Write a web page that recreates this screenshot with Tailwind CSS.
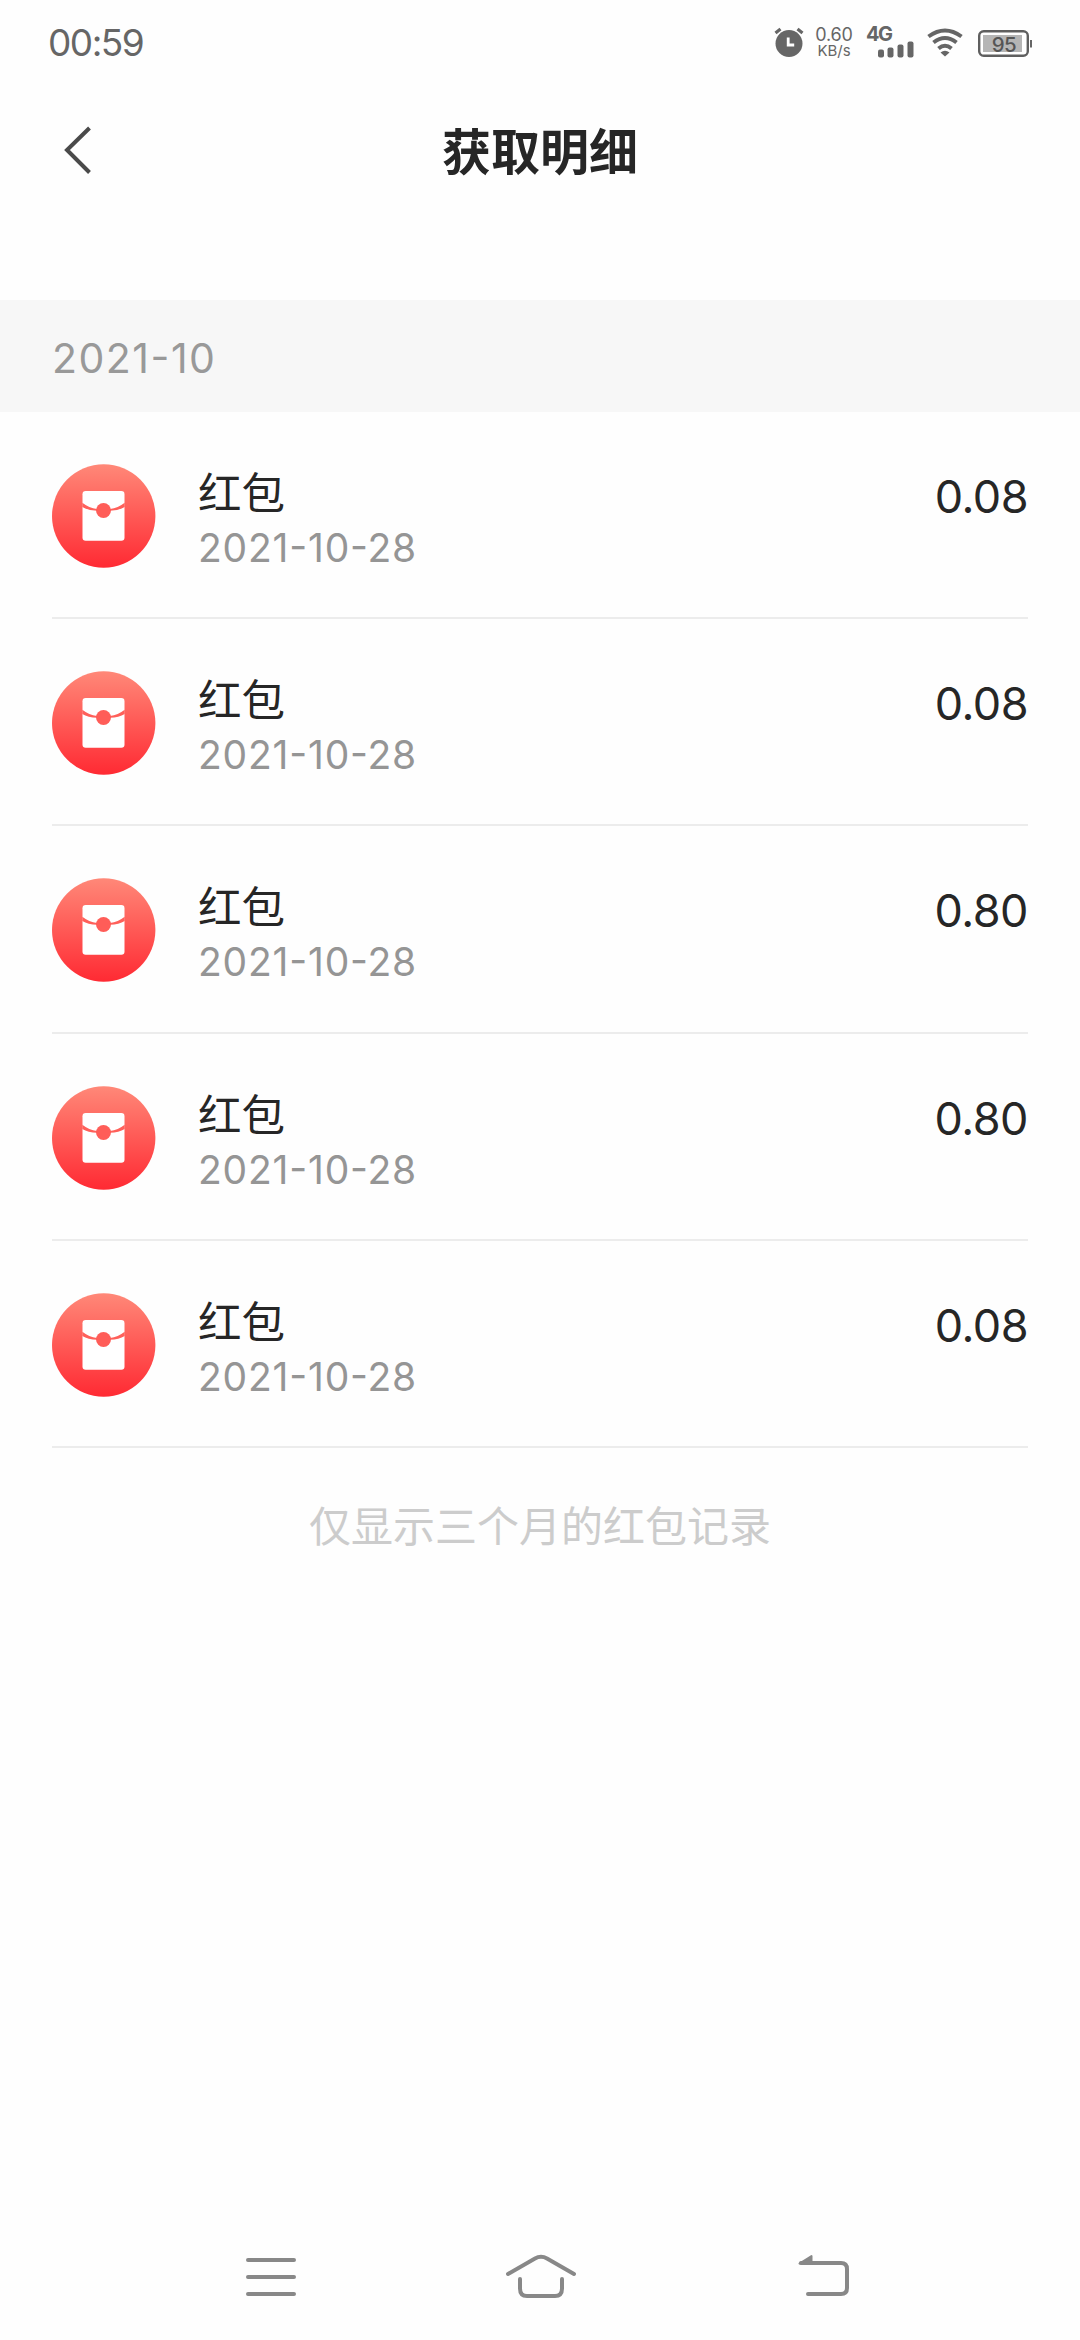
<!DOCTYPE html>
<html lang="zh-CN">
<head>
<meta charset="utf-8">
<title>获取明细</title>
<script src="https://cdn.jsdelivr.net/npm/@tailwindcss/browser@4"></script>
</head>
<body class="bg-[#fefefe]">
<div class="flex h-[2340px] w-[1080px] flex-col overflow-hidden bg-[#fefefe] font-['Inter','Noto_Sans_CJK_SC',sans-serif] text-[#262626]">

  <div class="flex h-[84px] items-center pl-[48px] pr-[48px] text-[#666]">
    <span class="text-[37px] leading-none tracking-[-1.5px]">00:59</span>
    <div class="ml-auto flex h-full items-center">
      <svg class="mr-[11px] h-[30px] w-[30px]" viewBox="0 0 30 30" fill="none">
        <circle cx="15" cy="16.500" r="13.500" fill="#666"/>
        <path d="M1.500 6L6.500 2M28.500 6L23.500 2" stroke="#666" stroke-width="3.200"/>
        <path d="M14.200 10.500V18h6" stroke="#fff" stroke-width="2.800"/>
      </svg>
      <div class="mr-[13px] flex w-[38px] flex-col items-center leading-none">
        <span class="text-[18px] leading-[17px] tracking-[-0.2px]">0.60</span>
        <span class="text-[15px] leading-[15px]">KB/s</span>
      </div>
      <div class="mr-[13px] flex h-[30px] w-[48px] flex-col">
        <span class="text-[20px] font-bold leading-[15px] tracking-[-1.5px]">4G</span>
        <svg class="mt-[-1px] ml-[12px] h-[17px] w-[36px] shrink-0" viewBox="0 0 36 17" fill="#666">
          <rect x="0" y="8.500" width="6" height="8" rx="2"/><rect x="9.500" y="6.500" width="6" height="10" rx="2"/><rect x="19.500" y="3.500" width="6" height="13" rx="2"/><rect x="29.500" y="0.500" width="6" height="16" rx="2"/>
        </svg>
      </div>
      <svg class="mr-[15px] h-[30px] w-[36px]" viewBox="0 0 36 30" fill="none" stroke="#666" stroke-width="4">
        <path d="M1.500 9.500Q18-2.500 34.500 9.500M6.500 15.500Q18 6.500 29.500 15.500M11.500 21.500Q18 16 24.500 21.500"/>
        <path d="M13.500 25.500Q18 22 22.500 25.500L18 29.500z" fill="#666" stroke="none"/>
      </svg>
      <svg class="mt-[3px] h-[28px] w-[54px]" viewBox="0 0 54 28">
        <rect x="1.200" y="1.200" width="48.600" height="24.600" rx="4.500" fill="#fff" stroke="#5f5f5f" stroke-width="2.400"/>
        <rect x="5" y="5" width="39" height="17" fill="#b5b5b5"/>
        <rect x="52" y="10" width="2" height="7.500" fill="#666"/>
        <text x="26" y="21.500" text-anchor="middle" font-family="Inter" font-size="20.500" font-weight="500" fill="#555" letter-spacing="-0.500">95</text>
      </svg>
    </div>
  </div>

  <div class="grid h-[216px] grid-cols-3 items-start pt-[42px]">
    <svg class="ml-[62px] h-[50px] w-[32px]" viewBox="0 0 32 50" fill="none" stroke="#4a4a4a" stroke-width="4"><path d="M27.500 2L5 24L27.500 46.500"/></svg>
    <h1 class="pt-[2px] text-center text-[49px] font-bold leading-[50px]">获取明细</h1>
  </div>

  <div class="flex h-[112px] items-center bg-[#f7f7f7] pl-[52px] pt-[6px] text-[41px] tracking-[1.5px] text-[#999] [font-feature-settings:'case']"><span>2021-10</span></div>

  <div id="list" class="flex flex-col px-[52px]"></div>

  <p class="mt-[54px] text-center text-[42px] leading-[50px] text-[#ccc]">仅显示三个月的红包记录</p>

  <div class="mt-auto flex h-[96px] items-center justify-center">
    <svg class="h-[96px] w-[1080px]" viewBox="0 0 1080 96" fill="none" stroke="#888" stroke-width="4" stroke-linecap="round" stroke-linejoin="round">
      <path d="M248 16h46M248 33h46M248 50h46"/>
      <path d="M508 30L535 14.500Q541 11 547 14.500L574 30M520 35V44.500Q520 52 527 52H555Q562 52 562 44.500V35"/>
      <path d="M801 19H841Q847 19 847 25V44Q847 50 841 50H808"/><path d="M799.500 19.500L811.500 12V19.500z" stroke-width="2" fill="#888"/>
    </svg>
  </div>
</div>
<script>
  const amounts = ['0.08', '0.08', '0.80', '0.80', '0.08'];
  document.getElementById('list').innerHTML = amounts.map(a => `
    <div class="flex h-[207.2px] border-b-2 border-[#ececec] pt-[52px]">
      <svg class="h-[104px] w-[104px] shrink-0" viewBox="0 0 104 104">
        <defs><linearGradient id="g" x1="0" y1="0" x2="0" y2="1"><stop offset="0" stop-color="#ff8878"/><stop offset="1" stop-color="#ff2a33"/></linearGradient></defs>
        <circle cx="51.700" cy="52" r="51.700" fill="url(#g)"/>
        <rect x="30.500" y="27" width="42" height="49.700" rx="3.200" fill="#fff"/>
        <path d="M30.300 38.800Q37 44 45 45V46.800Q36 46.500 30.300 43zM72.700 38.800Q66 44 58 45V46.800Q67 46.500 72.700 43z" fill="#ff605a"/>
        <circle cx="51.500" cy="46.500" r="7.500" fill="#ff5d58"/>
      </svg>
      <div class="ml-[42px] flex flex-col">
        <span class="mt-[2px] text-[43.5px] leading-[54px]">红包</span>
        <span class="mt-[1px] text-[39px] leading-[54px] tracking-[0.8px] text-[#959595] [font-feature-settings:'case']">2021-10-28</span>
      </div>
      <span class="ml-auto mt-[6px] text-[45px] leading-[54px] tracking-[-0.500px]">${a}</span>
    </div>`).join('');
</script>
</body>
</html>
